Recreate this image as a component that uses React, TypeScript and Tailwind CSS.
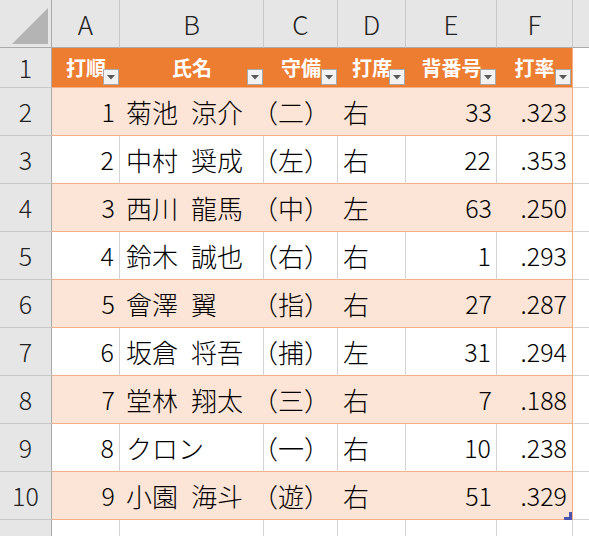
import * as React from "react";

// Excel-style sheet: a formatted table (orange header, banded rows)

const FONT = { fontFamily: '"Noto Sans CJK JP", "Noto Sans", sans-serif' };

const COLS = ["A", "B", "C", "D", "E", "F"];
const WIDTHS = ["w-[68px]", "w-[144px]", "w-[74px]", "w-[68px]", "w-[91px]", "w-[76px]"];
const HEADERS = ["打順", "氏名", "守備", "打席", "背番号", "打率"];

type Player = [number, string, string, string, number, string];

// names use an en space between family and given name
const PLAYERS: Player[] = [
  [1, "菊池\u2002涼介", "（二）", "右", 33, ".323"],
  [2, "中村\u2002奨成", "（左）", "右", 22, ".353"],
  [3, "西川\u2002龍馬", "（中）", "左", 63, ".250"],
  [4, "鈴木\u2002誠也", "（右）", "右", 1, ".293"],
  [5, "會澤\u2002翼", "（指）", "右", 27, ".287"],
  [6, "坂倉\u2002将吾", "（捕）", "左", 31, ".294"],
  [7, "堂林\u2002翔太", "（三）", "右", 7, ".188"],
  [8, "クロン", "（一）", "右", 10, ".238"],
  [9, "小園\u2002海斗", "（遊）", "右", 51, ".329"],
];

// per-column alignment, padding and size of the values
const CELL = [
  "justify-end pr-[5px] text-[25px]",
  "justify-start pl-[6px] text-[26px]",
  "justify-start text-[26px]",
  "justify-start pl-[5px] text-[26px]",
  "justify-end pr-[5px] text-[25px]",
  "justify-end pr-[5px] text-[25px]",
];

function FilterButton() {
  return (
    <span className="absolute right-[1px] bottom-[2px] flex h-[16px] w-[16px] items-center justify-center border border-[#a9a9a9] bg-[#f2f2f2]">
      <svg width="8" height="5" viewBox="0 0 8 5" aria-hidden>
        <path d="M0 0H8L4 4.5Z" fill="#595959" />
      </svg>
    </span>
  );
}

function RowHeader({ n, h }: { n: string; h: string }) {
  return (
    <div
      className={`flex w-[52px] shrink-0 items-center justify-center border-r border-b border-r-[#ababab] border-b-[#c8c8c8] bg-[#e6e6e6] text-[25px] font-light text-[#222] ${h}`}
    >
      {n}
    </div>
  );
}

export default function App() {
  return (
    <div className="h-[536px] w-[589px] overflow-hidden bg-white text-black" style={FONT}>
      {/* column letters */}
      <div className="flex h-[48px]">
        <div className="flex w-[52px] shrink-0 items-end justify-end border-r border-b border-[#ababab] bg-[#e6e6e6] pr-[3px] pb-[3px]">
          <svg width="36" height="36" viewBox="0 0 36 36" aria-hidden>
            <path d="M36 0V36H0Z" fill="#b4b4b4" />
          </svg>
        </div>
        {COLS.map((c, i) => (
          <div
            key={c}
            className={`flex shrink-0 items-center justify-center border-r border-b border-r-[#c8c8c8] border-b-[#ababab] bg-[#e6e6e6] text-[26px] font-light text-[#222] ${WIDTHS[i]}`}
          >
            {c}
          </div>
        ))}
        <div className="flex-1 border-b border-[#ababab] bg-[#e6e6e6]" />
      </div>

      {/* row 1: table header */}
      <div className="flex h-[40px]">
        <RowHeader n="1" h="h-[40px]" />
        {HEADERS.map((t, i) => (
          <div
            key={t}
            className={`relative flex shrink-0 items-center justify-center border-b border-[#f4b084] bg-[#ed7d31] text-[20px] font-bold text-white ${WIDTHS[i]} ${i === 5 ? "border-r" : ""}`}
          >
            {t}
            <FilterButton />
          </div>
        ))}
        <div className="flex-1 border-b border-[#d4d4d4]" />
      </div>

      {/* rows 2-10: data */}
      {PLAYERS.map((p, r) => {
        const banded = r % 2 === 0;
        return (
          <div key={p[0]} className="flex h-[48px]">
            <RowHeader n={String(r + 2)} h="h-[48px]" />
            {p.map((v, i) => (
              <div
                key={i}
                className={`flex shrink-0 items-center whitespace-nowrap border-b border-b-[#f4b084] font-light ${WIDTHS[i]} ${CELL[i]} ${
                  banded ? "bg-[#fce4d6]" : "bg-white"
                } ${
                  i === 5
                    ? "border-r border-r-[#f4b084]"
                    : banded
                      ? ""
                      : "border-r border-r-[#d4d4d4]"
                }`}
              >
                {i === 2 ? <span className="-ml-[12px]">{v}</span> : v}
              </div>
            ))}
            <div className="relative flex-1 border-b border-[#d4d4d4]">
              {r === PLAYERS.length - 1 && (
                <svg
                  className="absolute left-[-9px] bottom-[-1px]"
                  width="8"
                  height="8"
                  viewBox="0 0 8 8"
                  aria-hidden
                >
                  <path d="M8 0V8H0V5H5V0Z" fill="#4b55b0" />
                </svg>
              )}
            </div>
          </div>
        );
      })}

      {/* row 11, cut off at the window edge */}
      <div className="flex h-[48px]">
        <RowHeader n="11" h="h-[48px]" />
        {COLS.map((c, i) => (
          <div key={c} className={`shrink-0 border-r border-b border-[#d4d4d4] ${WIDTHS[i]}`} />
        ))}
        <div className="flex-1 border-b border-[#d4d4d4]" />
      </div>
    </div>
  );
}
